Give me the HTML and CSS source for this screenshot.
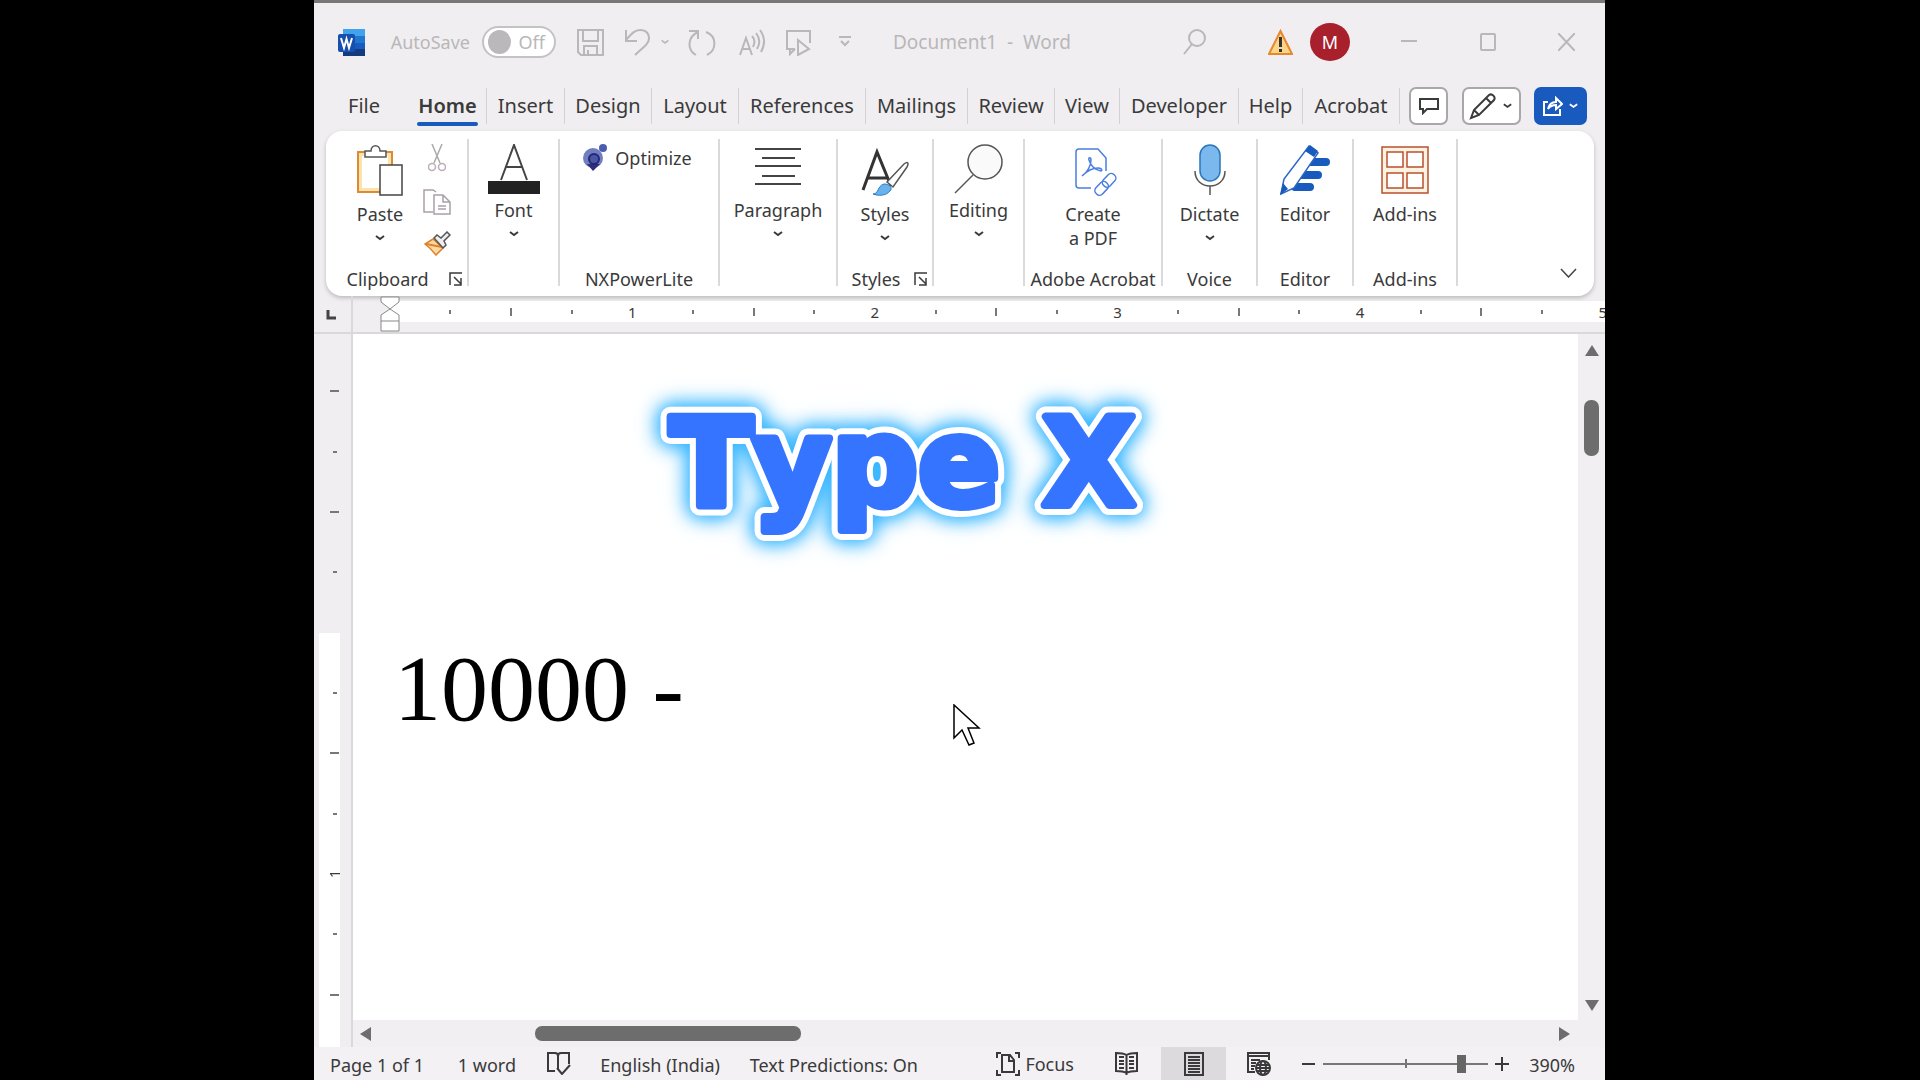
FILE: index.html
```html
<!DOCTYPE html>
<html lang="en">
<head>
  <meta charset="UTF-8">
  <meta name="viewport" content="width=device-width, initial-scale=1.0">
  <title>Document1 - Word</title>
  <link rel="stylesheet" href="styles.css">
</head>
<body>
<svg class="defs" width="0" height="0" aria-hidden="true">
  <symbol id="caret" viewBox="0 0 12 8"><path d="M2 2l4 3 4-3" fill="none" stroke="currentColor" stroke-width="2"/></symbol>
  <symbol id="launcher" viewBox="0 0 14 14"><path d="M1 13V1h12M5 5l7 7M12 6v7H5" fill="none" stroke="currentColor" stroke-width="1.5"/></symbol>
</svg>

<div class="window">
  <header class="titlebar">
    <svg width="27" height="27" viewBox="0 0 27 27">
      <rect x="5" width="22" height="7" fill="#3fa4ec"/>
      <rect x="5" y="7" width="22" height="7" fill="#2177d0"/>
      <rect x="5" y="14" width="22" height="7" fill="#185abd"/>
      <rect x="5" y="20" width="22" height="7" fill="#123b80"/>
      <rect y="5" width="17" height="18" rx="2" fill="#1550ae"/>
      <path d="M3 9l3 10 2.500-9 2.500 9 3-10" fill="none" stroke="#fff" stroke-width="2"/>
    </svg>
    <label for="autosave">AutoSave</label>
    <span class="toggle"><input type="checkbox" id="autosave"><span>Off</span></span>
    <button aria-label="Save"><svg width="27" height="27" viewBox="0 0 27 27"><path d="M1 1h25v25H4l-3-3zM6 1v11h15V1M7 26v-9h13v9M11 26v-5"/></svg></button>
    <button aria-label="Undo"><svg width="25" height="27" viewBox="0 0 25 27"><path d="M1 1v11h11M1 11C7 4 10 1 15 1c10 0 11 10 6 15L10 26"/></svg></button>
    <button aria-label="Undo list"><svg width="10" height="8"><use href="#caret"/></svg></button>
    <button aria-label="Repeat"><svg width="28" height="27" viewBox="0 0 28 27"><path d="M1 2h9v8M10 3C-1 8-1 21 8 26M18 3c11 4 11 18 1 23"/></svg></button>
    <button aria-label="Read aloud"><svg width="26" height="27" viewBox="0 0 26 27"><path d="M1 26L7 9l6 17M3 20h8M13 7c3 3 3 7 1 11M17 4c4 5 4 11 1 16M21 1c5 7 5 15 1 22"/></svg></button>
    <button aria-label="Present"><svg width="25" height="27" viewBox="0 0 25 27"><path d="M9 20H1V2h23v12M4 20v5l5-5M12 11l11 9-11 6z"/></svg></button>
    <button aria-label="Customize toolbar"><svg width="12" height="12" viewBox="0 0 12 12"><path d="M0 1h12M2 5l4 4 4-4"/></svg></button>
    <h1>Document1&nbsp; -&nbsp; Word</h1>
    <button aria-label="Search"><svg width="23" height="26" viewBox="0 0 23 26"><circle cx="14" cy="9" r="8"/><path d="M9 15L1 25"/></svg></button>
    <svg width="25" height="26" viewBox="0 0 25 26"><path d="M12.500 2L24 25H1z" fill="#fbd58a" stroke="#e8872b" stroke-width="2"/><path d="M12.500 8v10M12.500 20v3" stroke="#333" stroke-width="3"/></svg>
    <button class="avatar">M</button>
    <button aria-label="Minimize"><svg width="16" height="18" viewBox="0 0 16 18"><path d="M0 8h16"/></svg></button>
    <button aria-label="Maximize"><svg width="16" height="18" viewBox="0 0 16 18"><rect x="1" y="1" width="14" height="16" rx="1"/></svg></button>
    <button aria-label="Close"><svg width="17" height="18" viewBox="0 0 17 18"><path d="M0 0l17 18M17 0L0 18"/></svg></button>
  </header>

  <div class="tabbar">
    <nav class="tabs">
      <a href="#">File</a>
      <a href="#" class="active">Home</a>
      <a href="#">Insert</a>
      <a href="#">Design</a>
      <a href="#">Layout</a>
      <a href="#">References</a>
      <a href="#">Mailings</a>
      <a href="#">Review</a>
      <a href="#">View</a>
      <a href="#">Developer</a>
      <a href="#">Help</a>
      <a href="#">Acrobat</a>
    </nav>
    <div class="actions">
      <button class="comment" aria-label="Comments"><svg width="20" height="18" viewBox="0 0 20 18"><path d="M1 2h18v10H8l-4 4v-4H1z"/></svg></button>
      <button class="mode" aria-label="Editing mode"><svg width="28" height="27" viewBox="0 0 28 27"><path d="M2 25l3-8L20 2c3-2 7 2 5 5L10 22zM5 17l5 5M17 5l5 5"/></svg><svg width="11" height="8"><use href="#caret"/></svg></button>
      <button class="share" aria-label="Share"><svg width="20" height="20" viewBox="0 0 20 20"><path d="M5 6H1v13h16v-6M5 13c1-5 4-7 8-7V2l6 6-6 5V9c-3 0-6 1-8 4z"/></svg><svg width="11" height="8"><use href="#caret"/></svg></button>
    </div>
  </div>

  <section class="ribbon">
    <div class="group">
      <div class="tools clipboard">
        <button class="tool">
          <svg width="46" height="52" viewBox="0 0 46 52"><path d="M1 8h34v40H1z" fill="#fbe3ae" stroke="#dd8a35" stroke-width="2"/><path d="M5 12h26v32H5z" fill="#fff"/><path d="M8 13V7h6c0-7 9-7 9 0h6v6z" fill="#fff" stroke="#555" stroke-width="1.500"/><path d="M23 21h22v30H23z" fill="#fff" stroke="#444" stroke-width="1.500"/></svg>
          Paste
          <svg class="caret" width="12" height="8"><use href="#caret"/></svg>
        </button>
        <div class="small-tools">
          <button aria-label="Cut"><svg width="18" height="28" viewBox="0 0 18 28"><path d="M4 0l8 19M14 0L6 19" stroke="#aaa" fill="none" stroke-width="1.500"/><circle cx="4" cy="23" r="3.500" fill="none" stroke="#b9aeb9" stroke-width="1.500"/><circle cx="14" cy="23" r="3.500" fill="none" stroke="#b9aeb9" stroke-width="1.500"/></svg></button>
          <button aria-label="Copy"><svg width="28" height="26" viewBox="0 0 28 26"><path d="M13 3l-3-2H1v22h9M11 6h9l7 7v12H11zM20 6v7h7M15 17h8M15 20h8" fill="none" stroke="#a9a0a9" stroke-width="1.500"/></svg></button>
          <button aria-label="Format painter"><svg width="27" height="25" viewBox="0 0 27 25"><path d="M9 8l10 9-7 7C8 19 5 16 1 13z" fill="#fbd9a0" stroke="#e0802a" stroke-width="1.500"/><path d="M2 13l16 3" stroke="#e0802a" stroke-width="2"/><path d="M10 7l3-3 4 3 6-6 3 3-6 6 2 4-3 3z" fill="#eee" stroke="#555" stroke-width="1.500"/></svg></button>
        </div>
      </div>
      <footer class="has-launcher"><span>Clipboard</span><button aria-label="Clipboard options"><svg width="14" height="14"><use href="#launcher"/></svg></button></footer>
    </div>
    <div class="group">
      <button class="tool short">
        <svg width="54" height="52" viewBox="0 0 54 52"><path d="M14 36L27 1l13 35M18 23h18" fill="none" stroke="#444" stroke-width="2"/><path d="M1 37h52v13H1z" fill="#222"/></svg>
        Font
        <svg class="caret" width="12" height="8"><use href="#caret"/></svg>
      </button>
    </div>
    <div class="group">
      <button class="optimize">
        <svg width="26" height="27" viewBox="0 0 26 27"><circle cx="11" cy="14" r="10" fill="#6f7fc0"/><path d="M5 20h13l-7 7z" fill="#2c2d7c"/><circle cx="12" cy="15" r="5" fill="#4a55a8" stroke="#25276f" stroke-width="2"/><circle cx="21" cy="4" r="4" fill="#4b5db0"/></svg>
        Optimize
      </button>
      <footer>NXPowerLite</footer>
    </div>
    <div class="group">
      <button class="tool short">
        <svg width="46" height="52" viewBox="0 0 46 52"><path d="M0 5h46M7 14h33M0 22h46M7 32h33M0 40h46" stroke="#444" stroke-width="2"/></svg>
        Paragraph
        <svg class="caret" width="12" height="8"><use href="#caret"/></svg>
      </button>
    </div>
    <div class="group">
      <button class="tool">
        <svg width="50" height="52" viewBox="0 0 50 52"><path d="M3 46L17 8l14 34M8 34h20" fill="none" stroke="#333" stroke-width="3"/><path d="M27 38L44 20c4-3 5-1 3 3L33 43z" fill="#fff" stroke="#555" stroke-width="1.500"/><path d="M13 50c6 0 4-8 11-10 6 0 9 4 6 7-4 5-12 5-17 3z" fill="#6ab2ec" stroke="#2b7cc4"/></svg>
        Styles
        <svg class="caret" width="12" height="8"><use href="#caret"/></svg>
      </button>
      <footer class="has-launcher"><span>Styles</span><button aria-label="Styles options"><svg width="14" height="14"><use href="#launcher"/></svg></button></footer>
    </div>
    <div class="group">
      <button class="tool short">
        <svg width="50" height="52" viewBox="0 0 50 52"><circle cx="31" cy="18" r="17" fill="#fafafa" stroke="#555" stroke-width="1.500"/><path d="M19 31L1 49" stroke="#555" stroke-width="1.500"/></svg>
        Editing
        <svg class="caret" width="12" height="8"><use href="#caret"/></svg>
      </button>
    </div>
    <div class="group">
      <button class="tool">
        <svg width="50" height="52" viewBox="-7 0 50 52" fill="none" stroke="#4a7ee0" stroke-width="1.500"><path d="M16 44H4q-3 0-3-3V8q0-3 3-3h19l8 9v13M7 32c6-4 9-11 9-16 0-3-3-3-2 0 2 6 6 10 12 11 2-1 0-3-3-3-6 0-11 3-16 8"/><g transform="rotate(-47 30 40)"><rect x="17" y="36" width="15" height="9" rx="4"/><rect x="28" y="36" width="15" height="9" rx="4"/></g></svg>
        Create<br>a PDF
      </button>
      <footer>Adobe Acrobat</footer>
    </div>
    <div class="group">
      <button class="tool">
        <svg width="32" height="52" viewBox="0 0 32 52"><rect x="6" y="1" width="20" height="36" rx="10" fill="#7ab8ee" stroke="#2b76b8" stroke-width="1.500"/><path d="M1 27c0 20 30 20 30 0M16 42v9" fill="none" stroke="#555" stroke-width="1.500"/></svg>
        Dictate
        <svg class="caret" width="12" height="8"><use href="#caret"/></svg>
      </button>
      <footer>Voice</footer>
    </div>
    <div class="group">
      <button class="tool">
        <svg width="52" height="52" viewBox="0 0 52 52"><path d="M28 18h19M22 31h17M16 43h15" stroke="#185abd" stroke-width="8" stroke-linecap="round"/><path d="M2 50l3-15L30 2l9 7-24 35z" fill="#fff" stroke="#2b66c4" stroke-width="1.500"/><path d="M31 1l8 6-4 6-9-6zM1 51l3-12 5 6z" fill="#185abd"/></svg>
        Editor
      </button>
      <footer>Editor</footer>
    </div>
    <div class="group">
      <button class="tool">
        <svg width="48" height="52" viewBox="0 0 48 52"><path d="M1 3h46v46H1z" fill="#fdf3e3" stroke="#b8512e" stroke-width="1.500"/><path d="M6 8h16v15H6zM26 8h16v15H26zM6 29h16v15H6zM26 29h16v15H26z" fill="#fff" stroke="#b8512e" stroke-width="1.500"/></svg>
        Add-ins
      </button>
      <footer>Add-ins</footer>
    </div>
    <button class="collapse" aria-label="Collapse ribbon"><svg width="17" height="10" viewBox="0 0 17 10"><path d="M1 1l7.500 8L16 1" fill="none" stroke="#444" stroke-width="1.500"/></svg></button>
  </section>

  <div class="ruler">
    <div class="corner"><svg width="10" height="10" viewBox="0 0 10 10"><path d="M2 0v8h8" fill="none" stroke="#444" stroke-width="3"/></svg></div>
    <svg class="indent" width="20" height="36" viewBox="0 0 20 36"><path d="M1 1h18v5L10 13 1 6zM10 13l9 6v16H1V19zM1 25h18" fill="#fff" stroke="#888"/></svg>
    <div class="scale">
      <i></i><b></b><i></i><span>1</span>
      <i></i><b></b><i></i><span>2</span>
      <i></i><b></b><i></i><span>3</span>
      <i></i><b></b><i></i><span>4</span>
      <i></i><b></b><i></i><span>5</span>
    </div>
  </div>

  <main class="workspace">
    <div class="side-ruler">
      <div class="side-scale">
        <b></b><i></i><b></b><i></i><span></span><i></i><b></b><i></i><span>1</span><i></i><b></b>
      </div>
    </div>
    <article class="page">
      <svg class="word-art" viewBox="0 0 520 170">
        <use class="outline" href="#word-art-text"/>
        <g class="fill"><text id="word-art-text" x="11" y="111">Type X</text></g>
      </svg>
      <p>10000 -</p>
      <svg class="pointer" width="28" height="42" viewBox="0 0 28 42"><path d="M1 1v33l8-8 7 15 5-2-6-15h11z" fill="#fff" stroke="#000" stroke-width="1.500"/></svg>
    </article>
    <div class="vscroll">
      <svg width="14" height="11"><path d="M0 11L7 0l7 11z"/></svg>
      <div class="thumb"></div>
      <svg width="14" height="11"><path d="M0 0l7 11 7-11z"/></svg>
    </div>
    <div class="hscroll">
      <svg width="11" height="14"><path d="M11 0L0 7l11 7z"/></svg>
      <div class="thumb"></div>
      <svg width="11" height="14"><path d="M0 0l11 7-11 7z"/></svg>
    </div>
  </main>

  <footer class="status">
    <span>Page 1 of 1</span>
    <span>1 word</span>
    <button aria-label="Proofing"><svg width="24" height="23" viewBox="0 0 24 23"><path d="M8 19H1V1h7q3 0 3 3 0-3 3-3h8v11M11 4v13M10 16l5 6 8-9"/></svg></button>
    <span>English (India)</span>
    <span>Text Predictions: On</span>
    <button class="focus"><svg width="24" height="24" viewBox="0 0 24 24"><path d="M5 1H1v5M19 1h4v5M1 18v5h4M23 18v5h-4M6 3h8l4 5v12H6zM13 3v6h5"/></svg>Focus</button>
    <button aria-label="Read mode"><svg width="23" height="23" viewBox="0 0 23 23"><path d="M11.500 3Q8 1 1 1v18q7 0 10.500 2Q15 19 22 19V1q-7 0-10.500 2v20M4 5h5M4 9h5M4 12h5M4 16h5M14 5h5M14 9h5M14 12h5M14 16h5"/></svg></button>
    <button class="print" aria-label="Print layout"><svg width="20" height="24" viewBox="0 0 20 24"><path d="M1 1h18v22H1zM4 5h12M4 8h12M4 11h12M4 14h12M4 17h12M4 20h12"/></svg></button>
    <button aria-label="Web layout"><svg width="24" height="24" viewBox="0 0 24 24"><path d="M8 20H1V1h21v7M1 4h21M4 8h9M4 11h5M4 14h4M4 17h3"/><circle cx="16" cy="16" r="7"/><ellipse cx="16" cy="16" rx="3" ry="7"/><path d="M9 16h14M10 13h12M10 19h12"/></svg></button>
    <button aria-label="Zoom out"><svg width="13" height="14" viewBox="0 0 13 14"><path d="M0 7h13"/></svg></button>
    <input type="range" aria-label="Zoom" min="0" max="100" value="86">
    <button aria-label="Zoom in"><svg width="14" height="14" viewBox="0 0 14 14"><path d="M0 7h14M7 0v14"/></svg></button>
    <span>390%</span>
  </footer>
</div>
</body>
</html>
```
FILE: styles.css
```css
* {
  box-sizing: border-box;
}
body {
  margin: 0;
  min-height: 100vh;
  background: #000;
  color: #3a3a3a;
  font-family: "Noto Sans", sans-serif;
  font-size: 18px;
  display: grid;
  grid-template-columns: 314fr 1291fr 315fr;
}
button {
  background: none;
  border: none;
  padding: 0;
  color: inherit;
  font: inherit;
  display: flex;
  align-items: center;
  justify-content: center;
}
svg {
  display: block;
  flex: none;
}
.defs {
  position: absolute;
}
.window {
  grid-column: 2;
  min-width: 0;
  min-height: 100vh;
  display: flex;
  flex-direction: column;
  background: #f0eef0;
  border-top: 3px solid #777876;
  overflow: hidden;
}

/* title bar */
.titlebar {
  height: 78px;
  display: grid;
  grid-template-columns: 51fr 105fr 86fr 48fr 46fr 20fr 46fr 49fr 46fr 40fr 220fr 135fr 87fr 57fr 67fr 79fr 79fr 30fr;
  align-items: center;
  justify-items: end;
  color: #b9b7b9;
  white-space: nowrap;
}
.titlebar button svg {
  fill: none;
  stroke: currentColor;
  stroke-width: 2;
}
.titlebar h1 {
  margin: 0;
  font-size: 19px;
  font-weight: normal;
}
.toggle {
  width: 74px;
  height: 32px;
  padding: 0 9px 0 4px;
  display: flex;
  align-items: center;
  justify-content: space-between;
  background: #fff;
  border: 2px solid #c4c2c4;
  border-radius: 16px;
}
.toggle input {
  appearance: none;
  width: 23px;
  height: 24px;
  margin: 0;
  background: #bab8ba;
  border-radius: 50%;
}
.titlebar .avatar {
  width: 40px;
  height: 38px;
  background: #a8202c;
  color: #fff;
  border-radius: 50%;
}

/* tabs */
.tabbar {
  height: 50px;
  display: grid;
  grid-template-columns: 1086fr 205fr;
}
.tabs {
  display: grid;
  grid-template-columns: 90fr 78fr 78fr 87fr 87fr 127fr 102fr 87fr 65fr 119fr 64fr 97fr;
  padding-left: 5px;
  margin: 7px 0;
}
.tabs a {
  min-width: 0;
  color: #3a3a3a;
  text-decoration: none;
  font-size: 20px;
  line-height: 36px;
  height: 36px;
  text-align: center;
  border-right: 1px solid #d3d1d3;
}
.tabs a:first-child {
  border-right: none;
}
.tabs .active {
  position: relative;
  font-weight: 600;
}
.tabs .active::after {
  content: "";
  position: absolute;
  left: 8px;
  right: 8px;
  bottom: -2px;
  height: 4px;
  background: #185abd;
  border-radius: 2px;
}
.actions {
  display: flex;
  align-items: center;
  justify-content: space-between;
  padding: 0 18px 0 9px;
}
.actions button {
  height: 38px;
  gap: 5px;
  background: #fff;
  border: 2px solid #aaa6aa;
  border-radius: 7px;
}
.actions svg {
  fill: none;
  stroke: currentColor;
  stroke-width: 2;
}
.actions .comment {
  width: 39px;
}
.actions .mode {
  width: 59px;
}
.actions .share {
  width: 53px;
  color: #fff;
  background: #185abd;
  border-color: #185abd;
}

/* ribbon */
.ribbon {
  height: 165px;
  margin: 0 11px 0 12px;
  display: grid;
  grid-template-columns: 143fr 91fr 160fr 118fr 96fr 91fr 138fr 95fr 96fr 104fr 136fr;
  background: #fff;
  border-radius: 16px;
  box-shadow: 0 2px 4px #bbb;
}
.group {
  min-width: 0;
  margin: 8px 0 10px;
  padding-top: 5px;
  display: flex;
  flex-direction: column;
  border-right: 2px solid #dcd9dc;
}
.tool {
  flex-direction: column;
  justify-content: flex-start;
  line-height: 24px;
}
.tool > svg:first-child {
  margin-bottom: 6px;
}
.tool.short > svg:first-child {
  margin-bottom: 2px;
}
.tool .caret {
  margin-top: 8px;
}
.clipboard {
  display: flex;
  gap: 13px;
  padding-left: 25px;
}
.clipboard .tool {
  width: 58px;
}
.small-tools {
  width: 30px;
  height: 112px;
  display: flex;
  flex-direction: column;
  align-items: center;
  justify-content: space-between;
}
.group footer {
  margin: auto 0 -5px;
  line-height: 24px;
  text-align: center;
  white-space: nowrap;
}
.group .has-launcher {
  display: grid;
  grid-template-columns: 1fr auto;
  padding-right: 4px;
}
.optimize {
  gap: 7px;
  margin-right: 4px;
}
.collapse {
  align-items: flex-end;
  justify-content: flex-end;
  padding: 0 17px 18px 0;
}

/* rulers */
.ruler {
  height: 38px;
  display: flex;
  border-bottom: 2px solid #dad8da;
}
.corner {
  width: 39px;
  padding: 14px 0 0 12px;
  border-right: 2px solid #dad8da;
}
.indent {
  margin-left: 27px;
  z-index: 1;
}
.scale {
  flex: 1;
  min-width: 0;
  margin: 5px -28px 10px -10px;
  padding-left: 30px;
  display: grid;
  grid-template-columns: repeat(20, 1fr);
  place-items: center;
  background: #fff;
  font-size: 15px;
}
.scale i,
.scale b {
  width: 2px;
  height: 4px;
  background: #777;
}
.scale b {
  height: 8px;
}
.workspace {
  flex: 1;
  display: grid;
  grid-template-columns: 39px 1fr 27px;
  grid-template-rows: 1fr 27px;
}
.side-ruler {
  grid-row: 1 / 3;
  padding: 0 11px 0 5px;
  border-right: 2px solid #dad8da;
}
.side-scale {
  height: 100%;
  padding: 27px 0 22px 6px;
  display: grid;
  grid-template-rows: repeat(11, 1fr);
  place-items: center;
  background: linear-gradient(#f0eef0 42%, #fff 42%);
}
.side-scale i,
.side-scale b {
  width: 4px;
  height: 2px;
  background: #777;
}
.side-scale b {
  width: 9px;
}
.side-scale span {
  font-size: 14px;
  writing-mode: vertical-rl;
  transform: rotate(180deg);
}

/* document */
.page {
  position: relative;
  background: #fff;
  overflow: hidden;
}
.word-art {
  width: 520px;
  margin: 60px 0 0 306px;
  overflow: visible;
  font-family: "DejaVu Sans", sans-serif;
  font-size: 121px;
  font-weight: bold;
  font-kerning: none;
  stroke-linejoin: round;
}
.word-art .outline {
  fill: #fff;
  stroke: #fff;
  stroke-width: 20px;
  filter: drop-shadow(0 0 9px #35b5ff) drop-shadow(0 0 9px #5cc4ff);
}
.word-art .fill {
  fill: #3574ff;
  stroke: #3574ff;
  stroke-width: 8px;
}
.page p {
  margin: 69px 0 0 41px;
  color: #000;
  font-family: "Liberation Serif", serif;
  font-size: 94px;
  line-height: 110px;
}
.pointer {
  position: absolute;
  left: 49%;
  top: 54%;
}
.vscroll,
.hscroll {
  display: flex;
  align-items: center;
  background: #f1eff1;
  fill: #6e6d6e;
}
.vscroll {
  flex-direction: column;
  padding: 11px 0 9px;
}
.hscroll {
  grid-column: 2 / 4;
  padding: 0 35px 0 7px;
}
.thumb {
  background: #6e6d6e;
  border-radius: 7px;
}
.vscroll .thumb {
  width: 15px;
  height: 56px;
  margin: 44px 0 auto;
}
.hscroll .thumb {
  width: 22%;
  height: 15px;
  margin: 0 auto 0 164px;
}

/* status bar */
.status {
  height: 33px;
  display: grid;
  grid-template-columns: 110fr 92fr 55fr 149fr 198fr 156fr 64fr 88fr 45fr 44fr 173fr 21fr 66fr 30fr;
  align-items: center;
  justify-items: end;
  background: #f3f1f3;
  white-space: nowrap;
}
.status > * {
  min-width: 0;
}
.status > span {
  padding-top: 3px;
}
.status svg {
  fill: none;
  stroke: #3a3a3a;
  stroke-width: 2;
}
.status .focus {
  gap: 5px;
}
.status .print {
  width: 65px;
  height: 33px;
  background: #dcdadc;
}
.status input {
  appearance: none;
  width: 165px;
  height: 20px;
  margin: 0;
  background: linear-gradient(#777, #777) center / 2px 9px no-repeat, linear-gradient(#777, #777) center / 100% 2px no-repeat;
}
.status input::-webkit-slider-thumb {
  appearance: none;
  width: 9px;
  height: 18px;
  background: #666;
}
```
